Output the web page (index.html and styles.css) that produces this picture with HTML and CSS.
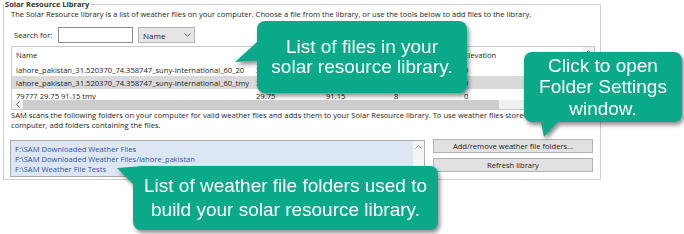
FILE: index.html
```html
<!DOCTYPE html>
<html>
<head>
<meta charset="utf-8">
<link rel="stylesheet" href="styles.css">
</head>
<body>
<div class="page">
  <fieldset class="group">
    <legend class="group-title">Solar Resource Library</legend>
    <p class="desc">The Solar Resource library is a list of weather files on your computer. Choose a file from the library, or use the tools below to add files to the library.</p>
    <div class="search-row">
      <span class="search-label">Search for:</span>
      <span class="search-input"></span>
      <span class="select"><span class="select-text">Name</span><svg class="chev" width="7" height="4" viewBox="0 0 7 4"><path d="M0.5 0.5 L3.5 3.3 L6.5 0.5" fill="none" stroke="#555" stroke-width="0.9"/></svg></span>
    </div>
    <div class="table">
      <div class="tbody">
        <div class="trow thead">
          <span class="cell">Name</span><span class="cell">Latitude</span><span class="cell">Longitude</span><span class="cell">Time zone</span><span class="cell">Elevation</span><span class="cell faint">Location</span>
        </div>
        <div class="trow">
          <span class="cell">lahore_pakistan_31.520370_74.358747_suny-international_60_20</span><span class="cell">31.52</span><span class="cell">74.36</span><span class="cell">5</span><span class="cell">0</span><span class="cell"></span>
        </div>
        <div class="trow selected">
          <span class="cell">lahore_pakistan_31.520370_74.358747_suny-international_60_tmy</span><span class="cell">31.52</span><span class="cell">74.36</span><span class="cell">5</span><span class="cell">0</span><span class="cell"></span>
        </div>
        <div class="trow">
          <span class="cell">79777 29.75 91.15 tmy</span><span class="cell">29.75</span><span class="cell">91.15</span><span class="cell">8</span><span class="cell">0</span><span class="cell"></span>
        </div>
      </div>
      <div class="vscroll"><svg width="7" height="4" viewBox="0 0 7 4"><path d="M0.5 3.5 L3.5 0.7 L6.5 3.5" fill="none" stroke="#606060" stroke-width="0.9"/></svg></div>
      <div class="hscroll">
        <span class="harrow"><svg width="4" height="7" viewBox="0 0 4 7"><path d="M3.5 0.5 L0.7 3.5 L3.5 6.5" fill="none" stroke="#505050" stroke-width="0.9"/></svg></span>
        <span class="hthumb"></span>
      </div>
      <div class="corner"></div>
    </div>
    <p class="scan">SAM scans the following folders on your computer for valid weather files and adds them to your Solar Resource library. To use weather files stored in a different location on your<br>computer, add folders containing the files.</p>
    <div class="folder-row">
      <div class="folder-list">
        <ul class="folders">
          <li>F:\SAM Downloaded Weather Files</li>
          <li>F:\SAM Downloaded Weather Files/lahore_pakistan</li>
          <li>F:\SAM Weather File Tests</li>
        </ul>
        <div class="fscroll"><svg width="7" height="4" viewBox="0 0 7 4"><path d="M0.5 3.5 L3.5 0.7 L6.5 3.5" fill="none" stroke="#909090" stroke-width="0.9"/></svg></div>
      </div>
      <div class="buttons">
        <span class="btn">Add/remove weather file folders...</span>
        <span class="btn">Refresh library</span>
      </div>
    </div>
  </fieldset>

  <div class="callout c1">List of files in your<br>solar resource library.</div>
  <div class="callout c2">Click to open<br>Folder Settings<br>window.</div>
  <div class="callout c3">List of weather file folders used to<br>build your solar resource library.</div>
</div>
</body>
</html>
```

FILE: styles.css
```css
* { box-sizing: border-box; }
body {
  margin: 0;
  background: #fff;
  font-family: "Open Sans", "Noto Sans", sans-serif;
  font-size: 7.6px;
  color: #1e1e1e;
}
.page {
  position: relative;
  width: 684px;
  height: 234px;
  overflow: hidden;
  padding-left: 3px;
}
.group {
  margin: 0;
  width: 598px;
  height: 180px;
  border: 1px solid #cfcfcf;
  padding: 0 5px 0 7px;
  min-width: 0;
}
.group-title {
  margin-left: -7px;
  padding: 0 1px;
  font-weight: bold;
  font-size: 7.5px;
  line-height: 9px;
  color: #333;
}
.desc {
  margin: 0;
  line-height: 11px;
  white-space: nowrap;
}
.search-row {
  margin-top: 7px;
  height: 16px;
  display: flex;
  align-items: center;
}
.search-label {
  margin-left: 3px;
  width: 44px;
}
.search-input {
  width: 75px;
  height: 16px;
  border: 1px solid #8a8a8a;
  background: #fff;
}
.select {
  margin-left: 5px;
  width: 57px;
  height: 16px;
  border: 1px solid #b4b4b4;
  background: #e5e5e5;
  display: flex;
  align-items: center;
  justify-content: space-between;
  padding: 0 3px 0 4px;
  font-size: 8px;
}
.table {
  margin-top: 3px;
  height: 64px;
  border: 1px solid #cacaca;
  display: grid;
  grid-template-columns: 1fr 11px;
  grid-template-rows: 53px 9px;
  background: #fff;
}
.tbody { overflow: hidden; }
.trow {
  display: grid;
  grid-template-columns: 240px 70px 68px 70px 70px 1fr;
  height: 13px;
  align-items: center;
  white-space: nowrap;
}
.thead { height: 16px; }
.trow.selected { background: #d9d9d9; }
.cell { padding-left: 4px; overflow: hidden; }
.faint { color: #b5b5b5; }
.vscroll {
  background: #f0f0f0;
  display: flex;
  justify-content: center;
  padding-top: 3px;
}
.hscroll {
  background: #f0f0f0;
  display: flex;
  align-items: center;
}
.harrow {
  width: 11px;
  display: flex;
  justify-content: center;
}
.hthumb {
  width: 476px;
  height: 9px;
  background: #cdcdcd;
}
.corner { background: #f0f0f0; }
.scan {
  margin: 0;
  line-height: 10px;
  white-space: nowrap;
}
.folder-row {
  margin-top: 10px;
  display: flex;
  align-items: flex-start;
}
.folder-list {
  margin-left: -1px;
  width: 415px;
  height: 37px;
  border: 1px solid #a9abb0;
  display: flex;
  background: #dde7f3;
}
.folders {
  list-style: none;
  margin: 0;
  padding: 3px 0 0 4px;
  flex: 1;
  color: #2d55a6;
  line-height: 10px;
}
.fscroll {
  width: 11px;
  background: #f4f4f4;
  display: flex;
  justify-content: center;
  padding-top: 4px;
}
.buttons {
  margin-left: 8px;
  margin-top: -1px;
  width: 160px;
  display: flex;
  flex-direction: column;
  gap: 5px;
}
.btn {
  height: 14px;
  border: 1px solid #b2b2b2;
  background: #e1e1e1;
  display: flex;
  align-items: center;
  justify-content: center;
  color: #1a1a1a;
}
.callout {
  position: absolute;
  background: #0aa98a;
  color: #fff;
  font-family: "Liberation Sans", Arial, sans-serif;
  font-size: 19px;
  text-align: center;
  border-radius: 8px;
  display: flex;
  align-items: center;
  justify-content: center;
  filter: drop-shadow(2px 3px 2px rgba(0, 0, 0, 0.45));
}
.callout::before {
  content: "";
  position: absolute;
  background: #0aa98a;
}
.c1 { left: 257px; top: 21px; width: 210px; height: 72px; line-height: 20px; }
.c1::before { left: -22px; top: 21px; width: 30px; height: 21px; clip-path: polygon(22px 0, 0 20px, 27px 18px); }
.c2 { left: 524px; top: 52px; width: 158px; height: 70px; line-height: 21.5px; }
.c2::before { left: 14px; top: 65px; width: 26px; height: 21px; clip-path: polygon(2px 0, 6px 20px, 24px 0); }
.c3 { left: 133px; top: 166px; width: 305px; height: 64px; line-height: 24px; }
.c3::before { left: -16px; top: 0; width: 30px; height: 22px; clip-path: polygon(0 2px, 28px 0, 18px 20px); }
```
